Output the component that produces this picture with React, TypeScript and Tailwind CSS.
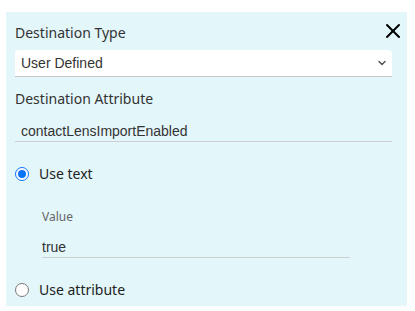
import { X, ChevronDown } from "lucide-react";

const ember = { fontFamily: '"Noto Sans", "Open Sans", Arial, sans-serif' };
const arial = { fontFamily: '"Liberation Sans", Arial, sans-serif' };

function Radio({ checked }: { checked: boolean }) {
  return checked ? (
    <span className="flex h-[14px] w-[14px] items-center justify-center rounded-full border-[1.5px] border-[#0a74ff] bg-white">
      <span className="h-[8px] w-[8px] rounded-full bg-[#0a74ff]" />
    </span>
  ) : (
    <span className="h-[14px] w-[14px] rounded-full border border-[#777] bg-white" />
  );
}

export default function App() {
  return (
    <div className="h-[311px] w-[415px] overflow-hidden bg-white pl-[6px] pt-[12px]">
      <div className="h-[294px] w-[401px] bg-[#e3f6fa] pl-[9px] pr-[15px] pt-[11px] text-[#333]" style={ember}>
        <div className="flex h-[20px] items-start justify-between">
          <span className="text-[14px] leading-[20px]">Destination Type</span>
          <X className="mr-[-13px] mt-[-4px] h-[24px] w-[24px] shrink-0 text-black" strokeWidth={2} />
        </div>

        <div
          className="mt-[7px] flex h-[27px] items-center justify-between rounded-t-[4px] border-b border-[#c7c7c7] bg-white pl-[6px] pr-[4px] text-[14px] text-[#333]"
          style={arial}
        >
          <span>User Defined</span>
          <ChevronDown className="h-[12px] w-[12px] text-[#555]" strokeWidth={3} />
        </div>

        <div className="mt-[12px] text-[14px] leading-[20px]">Destination Attribute</div>

        <div
          className="flex h-[33px] items-end border-b border-[#cfcfcf] pb-[2px] pl-[6px] text-[14px] leading-[16px] text-[#333]"
          style={arial}
        >
          contactLensImportEnabled
        </div>

        <div className="mt-[22px] flex h-[20px] items-center gap-[10px]">
          <Radio checked />
          <span className="text-[14px] leading-[20px] text-[#222]">Use text</span>
        </div>

        <div className="ml-[27px] mt-[25px] w-[308px]">
          <div className="text-[12px] leading-[16px] text-[#666]">Value</div>
          <div
            className="flex h-[33px] items-end border-b border-[#cfcfcf] pb-[2px] text-[14px] leading-[16px] text-[#333]"
            style={arial}
          >
            true
          </div>
        </div>

        <div className="mt-[22px] flex h-[20px] items-center gap-[10px]">
          <Radio checked={false} />
          <span className="text-[14px] leading-[20px] text-[#222]">Use attribute</span>
        </div>
      </div>
    </div>
  );
}
